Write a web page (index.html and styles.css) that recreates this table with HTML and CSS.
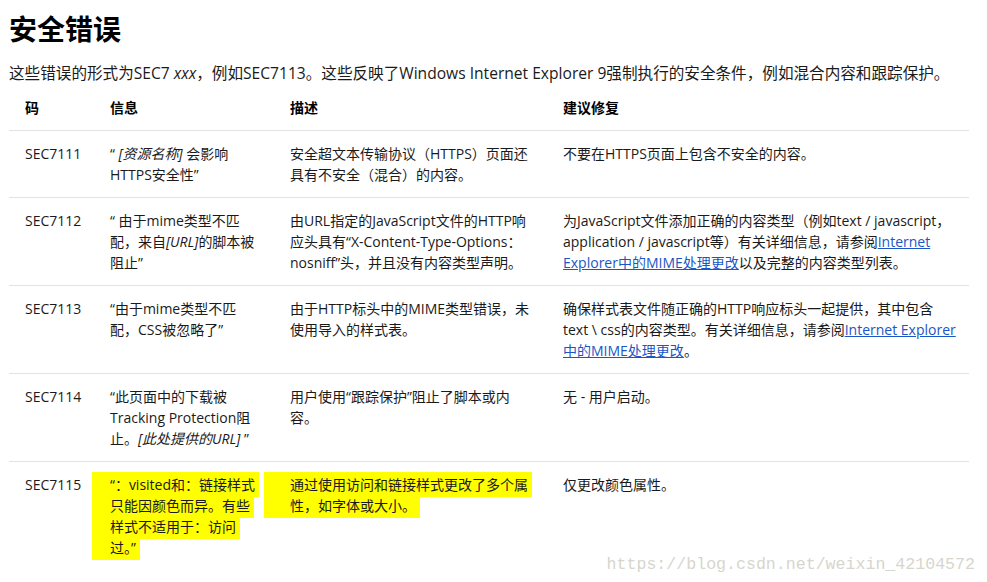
FILE: index.html
```html
<!DOCTYPE html>
<html lang="zh-CN">
<head>
<meta charset="utf-8">
<title>安全错误</title>
<link rel="stylesheet" href="styles.css">
</head>
<body>
<main class="page">
  <h1 class="title">安全错误</h1>
  <p class="intro">这些错误的形式为SEC7 <em>xxx</em>，例如SEC7113。这些反映了Windows Internet Explorer 9强制执行的安全条件，例如混合内容和跟踪保护。</p>
  <table class="errors">
    <colgroup>
      <col class="c-code"><col class="c-msg"><col class="c-desc"><col class="c-fix">
    </colgroup>
    <thead>
      <tr><th>码</th><th>信息</th><th>描述</th><th>建议修复</th></tr>
    </thead>
    <tbody>
      <tr>
        <td>SEC7111</td>
        <td>“ <em>[资源名称]</em> 会影响 HTTPS安全性”</td>
        <td>安全超文本传输协议（HTTPS）页面还具有不安全（混合）的内容。</td>
        <td>不要在HTTPS页面上包含不安全的内容。</td>
      </tr>
      <tr>
        <td>SEC7112</td>
        <td>“ 由于mime类型不匹配，来自<em>[URL]</em>的脚本被阻止”</td>
        <td>由URL指定的JavaScript文件的HTTP响应头具有“X-Content-Type-Options：nosniff”头，并且没有内容类型声明。</td>
        <td>为JavaScript文件添加正确的内容类型（例如text / javascript，application / javascript等）有关详细信息，请参阅<a href="#">Internet Explorer中的MIME处理更改</a>以及完整的内容类型列表。</td>
      </tr>
      <tr>
        <td>SEC7113</td>
        <td>“由于mime类型不匹配，CSS被忽略了”</td>
        <td>由于HTTP标头中的MIME类型错误，未使用导入的样式表。</td>
        <td>确保样式表文件随正确的HTTP响应标头一起提供，其中包含text \ css的内容类型。有关详细信息，请参阅<a href="#">Internet Explorer中的MIME处理更改</a>。</td>
      </tr>
      <tr>
        <td>SEC7114</td>
        <td>“此页面中的下载被Tracking Protection阻止。<em>[此处提供的URL]</em> ”</td>
        <td>用户使用“跟踪保护”阻止了脚本或内容。</td>
        <td>无 - 用户启动。</td>
      </tr>
      <tr>
        <td>SEC7115</td>
        <td><span class="hl">“：visited和：链接样式只能因颜色而异。有些样式不适用于：访问过。”</span></td>
        <td><span class="hl hl-desc">通过使用访问和链接样式更改了多个属性，如字体或大小。</span></td>
        <td>仅更改颜色属性。</td>
      </tr>
    </tbody>
  </table>
  <div class="watermark">https://blog.csdn.net/weixin_42104572</div>
</main>
</body>
</html>
```
FILE: styles.css
```css
html, body {
  margin: 0;
  padding: 0;
  background: #ffffff;
}
body {
  font-family: "Open Sans", "Noto Sans CJK SC", sans-serif;
  color: #1a1a1a;
  width: 987px;
  height: 582px;
  overflow: hidden;
}
.page {
  position: relative;
  padding: 0 9px;
  height: 582px;
  box-sizing: border-box;
}
.title {
  margin: 0;
  padding-top: 8px;
  font-size: 28px;
  line-height: 40px;
  font-weight: 700;
  font-family: "Noto Sans CJK SC", sans-serif;
  color: #000;
}
.intro {
  margin: 14px 0 0;
  font-size: 15.6px;
  line-height: 22px;
  letter-spacing: 0;
}
.intro em {
  font-style: italic;
}
.errors {
  width: 960px;
  margin-top: 1px;
  border-collapse: collapse;
  table-layout: fixed;
  font-size: 14px;
  line-height: 21px;
}
.c-code { width: 85px; }
.c-msg { width: 180px; }
.c-desc { width: 273px; }
.c-fix { width: 422px; }
.errors th,
.errors td {
  text-align: left;
  vertical-align: top;
  padding: 12px 16px 12px 16px;
  border-bottom: 1px solid #e3e3e3;
}
.errors td:last-child {
  padding-right: 13px;
}
.errors th {
  font-weight: 700;
  color: #000;
}
.errors tbody tr:last-child td {
  border-bottom: none;
}
.errors em {
  font-style: italic;
}
.errors a {
  color: #1a56c5;
  text-decoration: underline;
}
.hl {
  background: #ffff00;
  padding: 3px 4px 3px 18px;
  margin-left: -18px;
  -webkit-box-decoration-break: clone;
  box-decoration-break: clone;
}
.hl-desc {
  padding-left: 26px;
  margin-left: -26px;
}
.watermark {
  position: absolute;
  right: 12px;
  bottom: 8px;
  font-family: "Liberation Mono", monospace;
  font-size: 16.6px;
  color: #d6d6ce;
  letter-spacing: 0;
}
```
